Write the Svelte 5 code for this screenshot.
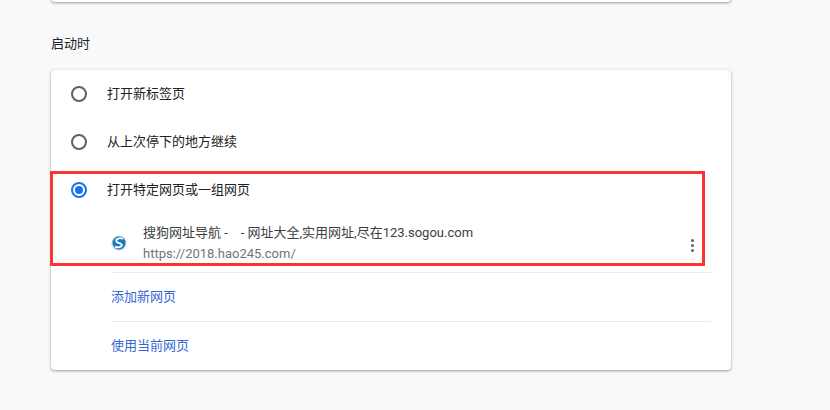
<script>
  const options = [
    { label: '打开新标签页', checked: false },
    { label: '从上次停下的地方继续', checked: false },
    { label: '打开特定网页或一组网页', checked: true }
  ];
  const links = ['添加新网页', '使用当前网页'];
</script>

<div class="page">
  <div class="card top-card"></div>
  <h2 class="heading">启动时</h2>

  <div class="card startup">
    {#each options as opt}
      <div class="radio-row">
        <span class="radio" class:checked={opt.checked}></span>
        <span class="radio-label">{opt.label}</span>
      </div>
    {/each}

    <div class="entry">
      <svg class="favicon" width="16" height="16" viewBox="0 0 16 16">
        <circle cx="8" cy="8" r="7.6" fill="#c4d0d8" />
        <circle cx="8" cy="8" r="6.4" fill="#1279bd" />
        <path d="M11.2 3.6C8.4 2.6 4.8 3.8 5.3 6.2 5.8 8.4 10.8 7.7 10.8 10.1 10.7 12 7.2 12.9 4.6 11.8" fill="none" stroke="#fff" stroke-width="1.8" stroke-linecap="round" />
      </svg>
      <div class="entry-text">
        <div class="entry-title">搜狗网址导航 -&nbsp;&nbsp;&nbsp; - 网址大全,实用网址,尽在123.sogou.com</div>
        <div class="entry-url">https://2018.hao245.com/</div>
      </div>
      <span class="more"><i></i><i></i><i></i></span>
    </div>

    {#each links as link}
      <div class="link-row">{link}</div>
    {/each}

    <div class="highlight"></div>
  </div>
</div>

<style>
  :global(body) {
    margin: 0;
    background: #f8f9fa;
  }

  .page {
    width: 830px;
    height: 410px;
    overflow: hidden;
    padding-left: 51px;
    box-sizing: border-box;
    font-family: Roboto, "Liberation Sans", "Noto Sans CJK SC", sans-serif;
    font-size: 13px;
    color: #202124;
  }

  .card {
    width: 680px;
    background: #fff;
    border-radius: 4px;
    box-shadow: 0 1px 2px rgba(60, 64, 67, 0.3), 0 1px 3px 1px rgba(60, 64, 67, 0.15);
  }

  .top-card {
    height: 20px;
    margin-top: -18px;
  }

  .heading {
    margin: 0;
    height: 68px;
    padding-top: 33px;
    box-sizing: border-box;
    font-size: 13px;
    font-weight: 400;
    line-height: 18px;
    color: #202124;
  }

  .startup {
    position: relative;
    height: 300px;
  }

  .radio-row {
    display: flex;
    align-items: center;
    height: 48px;
    padding-left: 20px;
  }

  .radio {
    width: 16px;
    height: 16px;
    box-sizing: border-box;
    border: 2px solid #5f6368;
    border-radius: 50%;
    position: relative;
  }

  .radio.checked {
    border-color: #1a73e8;
  }

  .radio.checked::after {
    content: '';
    position: absolute;
    inset: 2px;
    border-radius: 50%;
    background: #1a73e8;
  }

  .radio-label {
    margin-left: 20px;
    line-height: 18px;
  }

  .entry {
    display: flex;
    align-items: center;
    height: 58px;
    margin: 0 20px 0 60px;
    padding-bottom: 1px;
    box-sizing: border-box;
  }

  .favicon {
    flex: none;
    margin-top: 1px;
  }

  .entry-text {
    margin-left: 16px;
    flex: 1;
    line-height: 21px;
    color: #3c4043;
  }

  .entry-url {
    color: #70757a;
  }

  .more {
    display: flex;
    flex-direction: column;
    gap: 2px;
    margin-right: 17px;
    margin-top: 5px;
  }

  .more i {
    width: 3px;
    height: 3px;
    border-radius: 50%;
    background: #5f6368;
  }

  .link-row {
    display: flex;
    align-items: center;
    height: 49px;
    margin: 0 20px 0 60px;
    padding-bottom: 4px;
    border-top: 1px solid #e8eaed;
    box-sizing: border-box;
    color: #3367d6;
  }

  .highlight {
    position: absolute;
    left: -1px;
    top: 101px;
    width: 655px;
    height: 95px;
    box-sizing: border-box;
    border: 3px solid #ff3333;
  }
</style>
